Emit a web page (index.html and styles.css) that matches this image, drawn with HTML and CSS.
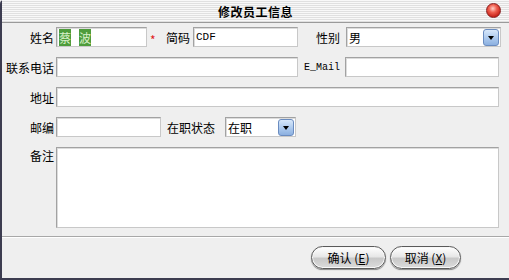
FILE: index.html
```html
<!DOCTYPE html>
<html lang="zh-CN">
<head>
    <meta charset="UTF-8">
    <title>修改员工信息</title>
    <link rel="stylesheet" href="styles.css">
</head>
<body>
    <div class="window">
        <div class="titlebar">
            <span class="title">修改员工信息</span>
            <span class="close"></span>
        </div>

        <div class="form">
            <div class="row">
                <label class="lbl">姓名</label>
                <div class="input w-name"><span class="sel">蔡</span>&nbsp;&nbsp;&nbsp;<span class="sel">波</span></div>
                <span class="req">*</span>
                <label class="lbl-inline l-code">简码</label>
                <div class="input mono w-code">CDF</div>
                <label class="lbl-inline l-sex">性别</label>
                <div class="select w-sex">男<span class="drop"></span></div>
            </div>

            <div class="row">
                <label class="lbl">联系电话</label>
                <div class="input w-phone"></div>
                <label class="lbl-inline mono l-mail">E_Mail</label>
                <div class="input w-mail"></div>
            </div>

            <div class="row">
                <label class="lbl">地址</label>
                <div class="input w-addr"></div>
            </div>

            <div class="row">
                <label class="lbl">邮编</label>
                <div class="input w-zip"></div>
                <label class="lbl-inline l-state">在职状态</label>
                <div class="select w-state">在职<span class="drop"></span></div>
            </div>

            <div class="row row-memo">
                <label class="lbl">备注</label>
                <div class="input memo"></div>
            </div>
        </div>

        <div class="footer">
            <button class="btn btn-ok">确认 (<u>E</u>)</button>
            <button class="btn btn-cancel">取消 (<u>X</u>)</button>
        </div>
    </div>
</body>
</html>
```

FILE: styles.css
```css
body {
    margin: 0;
    font-family: "Noto Sans CJK SC", "DejaVu Sans", sans-serif;
    font-size: 12px;
    color: #000;
    background: #efefef;
}
.window {
    width: 509px;
    height: 280px;
    box-sizing: border-box;
    background: #efefef;
    border-left: 2px solid #3c3c50;
    border-bottom: 2px solid #3c3c50;
    border-top-left-radius: 4px;
    display: flex;
    flex-direction: column;
}
.titlebar {
    height: 22px;
    flex: none;
    position: relative;
    display: flex;
    align-items: center;
    justify-content: center;
    border-bottom: 1px solid #9a9a9a;
    background: repeating-linear-gradient(to bottom, #f8f8f8 0, #f8f8f8 1px, #e0e0e0 1px, #e0e0e0 2px);
}
.title {
    font-weight: bold;
    font-size: 12px;
    letter-spacing: 0.5px;
}
.close {
    position: absolute;
    right: 8px;
    top: 3px;
    width: 15px;
    height: 15px;
    border-radius: 50%;
    border: 1px solid #8a2020;
    box-sizing: border-box;
    background: radial-gradient(circle at 45% 35%, #ffd0c8 0, #f06050 35%, #c01810 80%);
}
.form {
    padding: 4px 0 0 0;
    display: flex;
    flex-direction: column;
    gap: 10px;
}
.row {
    display: flex;
    align-items: center;
    height: 20px;
}
.row-memo {
    height: 81px;
    align-items: flex-start;
}
.lbl {
    width: 52px;
    text-align: right;
    margin-right: 2px;
    flex: none;
}
.lbl-inline {
    flex: none;
}
.input, .select {
    height: 20px;
    box-sizing: border-box;
    border: 1px solid #a2a2a2;
    border-right-color: #c8c8c8;
    border-bottom-color: #c8c8c8;
    background: #fff;
    box-shadow: inset 1px 1px 0 #dcdcdc;
    flex: none;
    display: flex;
    align-items: center;
    padding-left: 2px;
    white-space: pre;
}
.mono {
    font-family: "Liberation Mono", monospace;
    font-size: 11px;
}
.sel {
    background: #4e9c3c;
    color: #d8f0c8;
}
.req {
    color: #e02020;
    width: 10px;
    margin-left: 3px;
    font-size: 12px;
    padding-top: 4px;
}
.w-name { width: 91px; }
.l-code { margin-left: 6px; margin-right: 3px; }
.w-code { width: 105px; }
.l-sex { margin-left: 18px; margin-right: 6px; }
.w-sex { width: 155px; }
.w-phone { width: 242px; }
.l-mail { margin-left: 6px; margin-right: 5px; font-size: 10px; }
.w-mail { width: 154px; }
.w-addr { width: 443px; }
.w-zip { width: 105px; }
.l-state { margin-left: 6px; margin-right: 10px; }
.w-state { width: 71px; }
.memo { width: 443px; height: 81px; }
.select {
    justify-content: space-between;
    padding-right: 1px;
}
.drop {
    width: 16px;
    height: 17px;
    box-sizing: border-box;
    border: 1px solid #6a8cc0;
    border-radius: 3px;
    background: linear-gradient(to bottom, #d8e8fa, #a8c6ec 60%, #8cb0e0);
    position: relative;
}
.drop::after {
    content: "";
    position: absolute;
    left: 4px;
    top: 6px;
    border-left: 3px solid transparent;
    border-right: 3px solid transparent;
    border-top: 4px solid #000;
}
.footer {
    margin-top: auto;
    height: 41px;
    border-top: 1px solid #a8a8a8;
    box-shadow: inset 0 1px 0 #fff;
    display: flex;
    justify-content: flex-end;
    align-items: center;
    gap: 4px;
    padding-right: 48px;
}
.btn {
    font-family: "Noto Sans CJK SC", sans-serif;
    font-size: 12px;
    height: 23px;
    border: 1px solid #5a5a5a;
    border-radius: 12px;
    background: linear-gradient(to bottom, #ffffff 0, #e8e8e8 45%, #c8c8c8 55%, #dcdcdc 100%);
    box-shadow: inset 0 0 0 1px #f8f8f8, 0 1px 1px #888;
    padding: 0;
    color: #000;
}
.btn-ok { width: 75px; }
.btn-cancel { width: 71px; }
```
